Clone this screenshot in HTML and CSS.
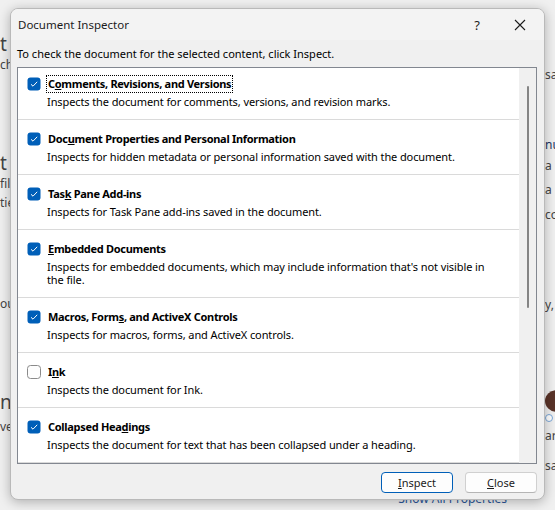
FILE: index.html
```html
<!DOCTYPE html>
<html lang="en">
<head>
    <meta charset="UTF-8">
    <title>Document Inspector</title>
    <link rel="stylesheet" href="styles.css">
</head>
<body>
    <div class="backstage">
        <div class="edge edge-left">
            <span class="frag frag-head" style="margin-top: 33px">t</span>
            <span class="frag" style="margin-top: 2px">ch</span>
            <span class="frag frag-head" style="margin-top: 79px">t</span>
            <span class="frag" style="margin-top: 2px">file</span>
            <span class="frag" style="margin-top: 3px">tie</span>
            <span class="frag" style="margin-top: 85px">ou</span>
            <span class="frag frag-head" style="margin-top: 79px">nt</span>
            <span class="frag" style="margin-top: 6px">ve</span>
        </div>
        <div class="middle">
            <a href="#" class="all-props">Show All Properties</a>
        </div>
        <div class="edge edge-right">
            <span class="frag" style="margin-top: 67px">sa</span>
            <span class="frag frag-blue" style="margin-top: 54px">nu</span>
            <span class="frag" style="margin-top: 5px">a <i class="warn"></i></span>
            <span class="frag" style="margin-top: 8px">a <i class="warn"></i></span>
            <span class="frag" style="margin-top: 9px">co</span>
            <span class="frag" style="margin-top: 74px">y,</span>
            <span class="avatar"></span>
            <span class="avatar-ring"></span>
            <span class="frag" style="margin-top: 6px">ar</span>
            <span class="frag" style="margin-top: 14px">sa</span>
        </div>
    </div>

    <div class="dialog">
        <div class="titlebar">
            <span class="title">Document Inspector</span>
            <span class="help">?</span>
            <svg class="close-x" width="12" height="12" viewBox="0 0 12 12">
                <path d="M1 1 L11 11 M11 1 L1 11" stroke="#1b1b1b" stroke-width="1.1" fill="none"/>
            </svg>
        </div>

        <div class="dialog-body">
            <p class="intro">To check the document for the selected content, click Inspect.</p>

            <div class="listbox">
                <div class="items">
                    <div class="item">
                        <svg class="check" width="14" height="14" viewBox="0 0 14 14"><rect x="0.5" y="0.5" width="13" height="13" rx="3" fill="#005fb8"/><path d="M4 7.3 L6 9.2 L10.2 4.8" stroke="#fff" stroke-width="1" fill="none"/></svg>
                        <div class="item-text">
                            <span class="label focused">C<u>o</u>mments, Revisions, and Versions</span>
                            <span class="desc">Inspects the document for comments, versions, and revision marks.</span>
                        </div>
                    </div>
                    <div class="item">
                        <svg class="check" width="14" height="14" viewBox="0 0 14 14"><rect x="0.5" y="0.5" width="13" height="13" rx="3" fill="#005fb8"/><path d="M4 7.3 L6 9.2 L10.2 4.8" stroke="#fff" stroke-width="1" fill="none"/></svg>
                        <div class="item-text">
                            <span class="label">Doc<u>u</u>ment Properties and Personal Information</span>
                            <span class="desc">Inspects for hidden metadata or personal information saved with the document.</span>
                        </div>
                    </div>
                    <div class="item">
                        <svg class="check" width="14" height="14" viewBox="0 0 14 14"><rect x="0.5" y="0.5" width="13" height="13" rx="3" fill="#005fb8"/><path d="M4 7.3 L6 9.2 L10.2 4.8" stroke="#fff" stroke-width="1" fill="none"/></svg>
                        <div class="item-text">
                            <span class="label">Tas<u>k</u> Pane Add-ins</span>
                            <span class="desc">Inspects for Task Pane add-ins saved in the document.</span>
                        </div>
                    </div>
                    <div class="item">
                        <svg class="check" width="14" height="14" viewBox="0 0 14 14"><rect x="0.5" y="0.5" width="13" height="13" rx="3" fill="#005fb8"/><path d="M4 7.3 L6 9.2 L10.2 4.8" stroke="#fff" stroke-width="1" fill="none"/></svg>
                        <div class="item-text">
                            <span class="label"><u>E</u>mbedded Documents</span>
                            <span class="desc">Inspects for embedded documents, which may include information that's not visible in<br>the file.</span>
                        </div>
                    </div>
                    <div class="item">
                        <svg class="check" width="14" height="14" viewBox="0 0 14 14"><rect x="0.5" y="0.5" width="13" height="13" rx="3" fill="#005fb8"/><path d="M4 7.3 L6 9.2 L10.2 4.8" stroke="#fff" stroke-width="1" fill="none"/></svg>
                        <div class="item-text">
                            <span class="label">Macros, Form<u>s</u>, and ActiveX Controls</span>
                            <span class="desc">Inspects for macros, forms, and ActiveX controls.</span>
                        </div>
                    </div>
                    <div class="item">
                        <svg class="check" width="14" height="14" viewBox="0 0 14 14"><rect x="0.5" y="0.5" width="13" height="13" rx="3" fill="#fdfdfd" stroke="#8a8a8a"/></svg>
                        <div class="item-text">
                            <span class="label">I<u>n</u>k</span>
                            <span class="desc">Inspects the document for Ink.</span>
                        </div>
                    </div>
                    <div class="item">
                        <svg class="check" width="14" height="14" viewBox="0 0 14 14"><rect x="0.5" y="0.5" width="13" height="13" rx="3" fill="#005fb8"/><path d="M4 7.3 L6 9.2 L10.2 4.8" stroke="#fff" stroke-width="1" fill="none"/></svg>
                        <div class="item-text">
                            <span class="label">Collapsed Hea<u>d</u>ings</span>
                            <span class="desc">Inspects the document for text that has been collapsed under a heading.</span>
                        </div>
                    </div>
                </div>
                <div class="scrollbar">
                    <div class="thumb"></div>
                </div>
            </div>

            <div class="actions">
                <button class="btn btn-default"><u>I</u>nspect</button>
                <button class="btn"><u>C</u>lose</button>
            </div>
        </div>
    </div>
</body>
</html>
```

FILE: styles.css
```css
* {
    margin: 0;
    padding: 0;
    box-sizing: border-box;
}

body {
    font-family: 'Noto Sans', 'Open Sans', sans-serif;
    font-size: 11px;
    background: #f0f0f0;
    color: #000;
    width: 555px;
    height: 510px;
    overflow: hidden;
    position: relative;
}

/* the Word backstage behind the modal */
.backstage {
    display: grid;
    grid-template-columns: 12px 1fr 12px;
    height: 510px;
}

.edge {
    display: flex;
    flex-direction: column;
    overflow: hidden;
    white-space: nowrap;
    color: #444;
}

.edge-left {
    align-items: flex-start;
}

.edge-right {
    padding-left: 2px;
}

.frag {
    display: block;
    line-height: 16px;
    font-size: 12px;
}

.frag-head {
    font-size: 19px;
    line-height: 22px;
}

.frag-blue {
    color: #1f3864;
}

.warn {
    display: inline-block;
    width: 4px;
    height: 8px;
    background: #f2c811;
    vertical-align: middle;
}

.avatar {
    display: block;
    margin-top: 77px;
    width: 24px;
    height: 22px;
    border-radius: 50%;
    background: #5a3328;
}

.avatar-ring {
    display: block;
    margin-top: 2px;
    width: 8px;
    height: 8px;
    border-radius: 50%;
    border: 1px solid #7aa7d8;
    background: #fff;
}

.middle {
    display: flex;
    align-items: flex-end;
    justify-content: flex-end;
    padding-right: 36px;
}

.all-props {
    font-size: 12px;
    line-height: 16px;
    margin-bottom: 3px;
    color: #2b579a;
    text-decoration: none;
}

/* modal dialog */
.dialog {
    position: absolute;
    left: 10px;
    top: 8px;
    width: 535px;
    height: 492px;
    background: #f0f0f0;
    border: 1px solid #b9b9b9;
    border-radius: 8px;
    box-shadow: 0 2px 12px rgba(0, 0, 0, 0.28);
    overflow: hidden;
}

.titlebar {
    display: flex;
    align-items: center;
    height: 31px;
    padding: 0 18px 0 7px;
    background: #f3f3f3;
    color: #1b1b1b;
}

.title {
    flex: 1;
    font-size: 11.5px;
}

.help {
    font-size: 13px;
    margin-right: 34px;
}

.dialog-body {
    padding: 6px 7px 0 6px;
}

.intro {
    line-height: 16px;
    margin-bottom: 5px;
}

.listbox {
    display: flex;
    height: 397px;
    background: #fff;
    border: 1px solid #828790;
    overflow: hidden;
}

.items {
    flex: 1;
    overflow: hidden;
}

.item {
    display: flex;
    padding: 11px 0 11px 9px;
    border-bottom: 1px solid #dadada;
}

.item:first-child {
    padding-top: 8px;
}

.check {
    flex-shrink: 0;
    margin-top: 1px;
    margin-right: 6px;
}

.item-text {
    display: flex;
    flex-direction: column;
    gap: 3px;
}

.label {
    align-self: flex-start;
    font-weight: bold;
    letter-spacing: -0.3px;
    line-height: 16px;
    padding: 0 1px;
    margin: -1px 0 -1px -1px;
    border: 1px dotted transparent;
}

.label.focused {
    border-color: #000;
}

.desc {
    line-height: 13px;
    letter-spacing: -0.1px;
}

.scrollbar {
    width: 17px;
    background: #f0f0f0;
    display: flex;
    justify-content: center;
    padding-top: 18px;
}

.thumb {
    width: 2px;
    height: 222px;
    background: #858585;
    border-radius: 1px;
}

.actions {
    display: flex;
    justify-content: flex-end;
    gap: 12px;
    margin-top: 8px;
}

.btn {
    width: 72px;
    height: 21px;
    font-family: inherit;
    font-size: 11px;
    color: #1b1b1b;
    background: #fdfdfd;
    border: 1px solid #d0d0d0;
    border-bottom-color: #b5b5b5;
    border-radius: 4px;
}

.btn-default {
    border: 1px solid #005fb8;
}
```
